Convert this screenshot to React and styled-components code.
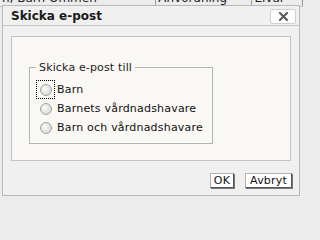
import React, { useState } from "react";
import styled, { createGlobalStyle } from "styled-components";

const GlobalStyle = createGlobalStyle`
  html, body {
    margin: 0;
    padding: 0;
  }
  body {
    width: 303px;
    height: 200px;
    overflow: hidden;
    background: #ececec;
    font-family: "DejaVu Sans", Verdana, sans-serif;
  }
`;

const Page = styled.div`
  position: relative;
  width: 303px;
  height: 200px;
  overflow: hidden;
`;

// the list behind the dialog, only its lowest pixels show
const BackRow = styled.div`
  display: flex;
  margin-top: -9px;
  height: 15px;
  border-bottom: 1px solid #c4c4c4;
  font-size: 12px;
  color: #222;
`;

const BackCell = styled.div`
  width: ${p => p.w}px;
  padding-left: 2px;
  border-right: 1px solid #9a9a9a;
  white-space: nowrap;
  overflow: hidden;
`;

const Dialog = styled.div`
  position: absolute;
  left: 2px;
  top: 5px;
  width: 298px;
  height: 191px;
  box-sizing: border-box;
  border: 1px solid #b9b9b9;
  background: #f0f0f0;
  display: flex;
  flex-direction: column;
`;

const TitleBar = styled.div`
  height: 19px;
  display: flex;
  align-items: center;
  justify-content: space-between;
  padding: 0 3px 0 8px;
  border-bottom: 1px solid #c9c9c9;
`;

const Title = styled.span`
  font-size: 12px;
  font-weight: bold;
  color: #1a1a1a;
`;

const CloseButton = styled.button`
  width: 26px;
  height: 15px;
  padding: 0;
  margin-top: 2px;
  border: 1px solid #cfcfcf;
  border-radius: 2px;
  background: #fff;
  display: flex;
  align-items: center;
  justify-content: center;
`;

const Body = styled.div`
  padding: 10px 8px 0 8px;
`;

const Panel = styled.div`
  height: 125px;
  box-sizing: border-box;
  border: 1px solid #c3c3c3;
  background: #f9f8f5;
  padding: 24px 0 0 17px;
`;

const Fieldset = styled.fieldset`
  width: 184px;
  box-sizing: border-box;
  margin: 0;
  padding: 6px 0 6px 6px;
  border: 1px solid #b4b4b4;
`;

const Legend = styled.legend`
  padding: 0 3px;
  font-size: 11px;
  line-height: 13px;
  letter-spacing: 0.15px;
  color: #222;
`;

const Row = styled.label`
  display: flex;
  align-items: center;
  height: 19px;
  font-size: 11px;
  letter-spacing: 0.2px;
  color: #111;
  white-space: nowrap;
`;

const RadioFrame = styled.span`
  width: 19px;
  height: 19px;
  box-sizing: border-box;
  display: flex;
  align-items: center;
  justify-content: center;
  border: 1px dotted ${p => (p.focused ? "#000" : "transparent")};
  margin-right: 2px;
`;

const Radio = styled.input`
  appearance: none;
  margin: 0;
  width: 12px;
  height: 12px;
  border-radius: 50%;
  border: 1px solid #a3a3a3;
  background: radial-gradient(circle at 40% 40%, #fafafa 0%, #e2e2e2 55%, #cfcfcf 100%);
  box-sizing: border-box;

  &:checked {
    background: radial-gradient(circle, #444 0 2px, #f0f0f0 3px);
  }
`;

const Footer = styled.div`
  display: flex;
  justify-content: flex-end;
  gap: 11px;
  padding: 12px 7px 0 0;
`;

const Button = styled.button`
  height: 15px;
  padding: 0 ${p => (p.wide ? 4 : 3)}px;
  border: 1px solid #b0b0b0;
  border-right-color: #555;
  border-bottom-color: #555;
  box-shadow: 1px 1px 0 #777;
  background: #fff;
  color: #111;
  font-size: 11px;
  letter-spacing: 0.2px;
  font-family: "DejaVu Sans", sans-serif;
  line-height: 13px;
`;

const CloseIcon = () => (
  <svg width="9" height="9" viewBox="0 0 9 9">
    <path d="M1 1 L8 8 M8 1 L1 8" stroke="#5a5a5a" strokeWidth="2" strokeLinecap="square" />
  </svg>
);

const options = ["Barn", "Barnets vårdnadshavare", "Barn och vårdnadshavare"];

const App = () => {
  const [value, setValue] = useState(null);

  return (
    <Page>
      <GlobalStyle />
      <BackRow>
        <BackCell w={158}>n, Barn Ommen</BackCell>
        <BackCell w={96}>Anvordning</BackCell>
        <BackCell w={49}>Elvar</BackCell>
      </BackRow>
      <Dialog>
        <TitleBar>
          <Title>Skicka e-post</Title>
          <CloseButton aria-label="Stäng">
            <CloseIcon />
          </CloseButton>
        </TitleBar>
        <Body>
          <Panel>
            <Fieldset>
              <Legend>Skicka e-post till</Legend>
              {options.map((opt, i) => (
                <Row key={opt}>
                  <RadioFrame focused={i === 0}>
                    <Radio
                      type="radio"
                      name="mottagare"
                      checked={value === opt}
                      onChange={() => setValue(opt)}
                    />
                  </RadioFrame>
                  {opt}
                </Row>
              ))}
            </Fieldset>
          </Panel>
        </Body>
        <Footer>
          <Button>OK</Button>
          <Button wide>Avbryt</Button>
        </Footer>
      </Dialog>
    </Page>
  );
};

export default App;
